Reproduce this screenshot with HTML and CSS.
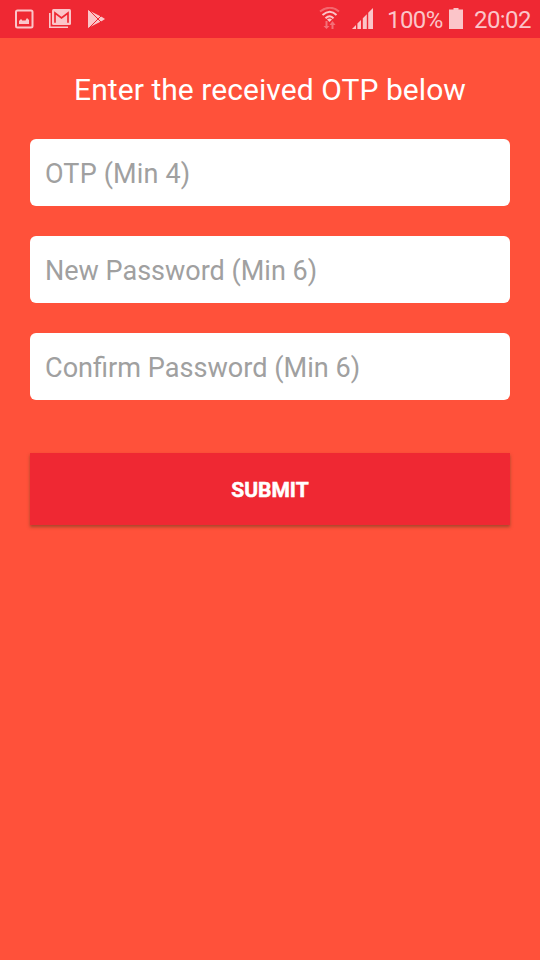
FILE: index.html
```html
<!DOCTYPE html>
<html lang="en">
<head>
<meta charset="utf-8">
<title>Reset password</title>
<link rel="stylesheet" href="styles.css">
</head>
<body>
<header class="status-bar">
  <div class="notifications">
    <svg width="19" height="20" viewBox="0 0 19 20"><rect x="1" y="1.5" width="16.5" height="17" rx="1.5" fill="none" stroke="currentColor" stroke-width="2"/><path fill="currentColor" d="M4 15v-3l2-2 2 2 1-1 1 1 2-3 2 2v4z"/></svg>
    <svg class="mail" width="23" height="20" viewBox="0 0 23 20"><path fill="none" stroke="currentColor" stroke-width="1.6" d="M.8 4v14.2H19"/><rect x="3" y="0" width="19" height="16" rx="1.5" fill="currentColor"/><path class="cut" fill="none" stroke-width="1.7" d="M6 13.8V4l6.5 5L19 4v9.8"/></svg>
    <svg class="play" width="18" height="18" viewBox="0 0 18 18"><path fill="currentColor" d="M0 0l14 7 3 2-3 2L0 18z"/><path class="cut" fill="none" stroke-width="1" d="M1 0l13 13M1 18L14 5"/></svg>
  </div>
  <div class="system">
    <svg width="22" height="23" viewBox="0 0 22 23"><g fill="none" stroke="currentColor" stroke-width="2"><path opacity=".4" d="M1 4.5Q11-3 20 4.5"/><path d="M3.5 8Q11 1.5 17.5 8M6.5 11.3Q11 7 14.5 11.3"/></g><path d="M8 12.5Q10.5 10.5 13 12.5L10.5 15z" fill="currentColor"/><path opacity=".45" fill="currentColor" d="M6.5 14h2v5h2l-3 3-3-3h2zM12.5 22h2v-4h2l-3-4-3 4h2z"/></svg>
    <svg class="signal" width="21" height="21" viewBox="0 0 21 21"><path fill="currentColor" d="M0 21l4-4v4zM5.4 21v-5.4L9 12v9zM10.8 21V10.2l4-4V21zM16.2 21V4.8L21 0v21z"/></svg>
    <span class="percent">100%</span>
    <svg class="battery" width="14" height="21" viewBox="0 0 14 21"><path fill="currentColor" d="M4.5 0h5v1.5H14V21H0V1.5h4.5z"/></svg>
    <span class="clock">20:02</span>
  </div>
</header>
<main class="form">
  <h1 class="title">Enter the received OTP below</h1>
  <input class="field otp" type="text" placeholder="OTP (Min 4)" aria-label="OTP">
  <input class="field" type="password" placeholder="New Password (Min 6)" aria-label="New password">
  <input class="field confirm" type="password" placeholder="Confirm Password (Min 6)" aria-label="Confirm password">
  <button class="submit" type="button">SUBMIT</button>
</main>
</body>
</html>
```
FILE: styles.css
```css
* { box-sizing: border-box; }
body {
  margin: 0;
  min-height: 960px;
  background: #ff513a;
  font-family: Roboto, sans-serif;
}
.status-bar {
  display: flex;
  justify-content: space-between;
  height: 38px;
  padding: 0 8px 0 15px;
  background: #ef2833;
  color: #fbc5c9;
  font-size: 24px;
  line-height: 40px;
}
.status-bar svg { display: block; flex: none; }
.notifications, .system { display: flex; align-items: flex-start; }
.notifications svg { margin-top: 9px; }
.notifications .mail { margin-left: 15px; }
.notifications .play { margin: 10px 0 0 16px; }
.cut { stroke: #ef2833; }
.system svg { margin-top: 7px; }
.system .signal { margin: 8px 0 0 11px; }
.percent, .clock { letter-spacing: -.6px; }
.percent { width: 56px; margin-left: 14px; }
.clock { width: 58px; }
.system .battery { margin: 8px 11px 0 6px; }
.form {
  display: flex;
  flex-direction: column;
  padding: 32px 30px 0;
}
.title {
  margin: 0 0 29px;
  color: #fff;
  font-size: 30px;
  font-weight: 400;
  letter-spacing: .06px;
  line-height: 40px;
  text-align: center;
}
.field {
  height: 67px;
  margin: 0 0 30px;
  padding: 2px 15px 0;
  border: 0;
  border-radius: 6px;
  background: #fff;
  font: 27px Roboto, sans-serif;
}
.otp { letter-spacing: .15px; }
.confirm { font-size: 27.12px; }
.field::placeholder { color: #a0a0a0; opacity: 1; }
.submit {
  height: 72px;
  margin-top: 23px;
  padding: 2px 0 0;
  border: 0;
  border-radius: 0;
  background: #ef2833;
  box-shadow: 0 2px 3px rgba(80, 60, 30, .5);
  color: #fff;
  font: 700 21px Roboto, sans-serif;
  -webkit-text-stroke: .5px #fff;
}
```
